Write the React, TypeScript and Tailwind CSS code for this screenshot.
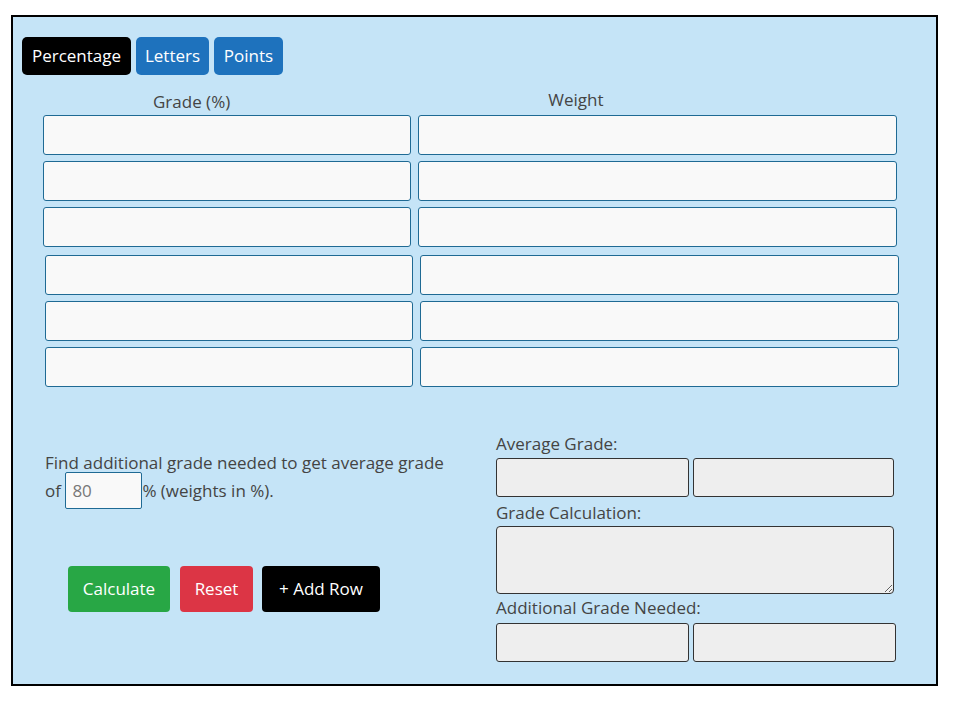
import React from "react";

const font = { fontFamily: '"Open Sans", "Noto Sans", Arial, sans-serif' };

function GradeRow() {
  return (
    <div className="flex gap-[7px]">
      <input className="h-[40px] w-[368px] rounded-[3px] border border-[#1f6a94] bg-[#f9f9f9]" />
      <input className="h-[40px] w-[479px] rounded-[3px] border border-[#1f6a94] bg-[#f9f9f9]" />
    </div>
  );
}

function OutPair({ wide }: { wide?: boolean }) {
  return (
    <div className="flex gap-[4px]">
      <input readOnly className="h-[39px] w-[193px] rounded-[3px] border border-[#333] bg-[#eeeeee]" />
      <input
        readOnly
        className={`h-[39px] rounded-[3px] border border-[#333] bg-[#eeeeee] ${wide ? "w-[203px]" : "w-[201px]"}`}
      />
    </div>
  );
}

export default function App() {
  return (
    <div className="min-h-screen bg-white pt-[15px] pl-[11px]" style={font}>
      <div className="h-[671px] w-[927px] border-2 border-black bg-[#c5e4f7] pt-[20px] pl-[9px] text-[#444]">
        <div className="flex gap-[5px] text-[17px] text-white">
          <button className="h-[38px] w-[109px] rounded-[5px] bg-black">Percentage</button>
          <button className="h-[38px] w-[73px] rounded-[5px] bg-[#1e72bd]">Letters</button>
          <button className="h-[38px] w-[69px] rounded-[5px] bg-[#1e72bd]">Points</button>
        </div>

        <div className="flex h-[40px] items-end pb-[2px] text-[17px] leading-[20px]">
          <span className="ml-[131px] mb-[1px]">Grade (%)</span>
          <span className="ml-[318px] mb-[3px]">Weight</span>
        </div>

        <div className="ml-[21px] flex flex-col gap-[6px]">
          <GradeRow />
          <GradeRow />
          <GradeRow />
        </div>
        <div className="mt-[8px] ml-[23px] flex flex-col gap-[6px]">
          <GradeRow />
          <GradeRow />
          <GradeRow />
        </div>

        <div className="flex">
          <div className="ml-[23px] w-[451px]">
            <p className="mt-[62px] text-[17px] leading-[28px]">
              Find additional grade needed to get average grade
              <br />
              of{" "}
              <input
                defaultValue="80"
                className="my-[-6px] h-[37px] w-[77px] rounded-[2px] border border-[#1f6a94] bg-[#f9f9f9] px-[6px] align-baseline text-[17px] text-[#777]"
              />
              % (weights in %).
            </p>
            <div className="mt-[61px] ml-[23px] flex gap-[10px] text-[17px] text-white">
              <button className="h-[46px] w-[102px] rounded-[4px] bg-[#28a745]">Calculate</button>
              <button className="h-[46px] w-[73px] rounded-[4px] bg-[#dc3545]">Reset</button>
              <button className="ml-[-1px] h-[46px] w-[118px] rounded-[4px] bg-black">+ Add Row</button>
            </div>
          </div>

          <div className="flex flex-col">
            <div className="mt-[46px] text-[17px] leading-[22px]">Average Grade:</div>
            <div className="mt-[3px]">
              <OutPair />
            </div>
            <div className="mt-[5px] text-[17px] leading-[22px]">Grade Calculation:</div>
            <textarea
              readOnly
              className="mt-[2px] h-[68px] w-[398px] rounded-[4px] border border-[#333] bg-[#eeeeee]"
            />
            <div className="mt-[3px] text-[17px] leading-[22px]">Additional Grade Needed:</div>
            <div className="mt-[4px]">
              <OutPair wide />
            </div>
          </div>
        </div>
      </div>
    </div>
  );
}
